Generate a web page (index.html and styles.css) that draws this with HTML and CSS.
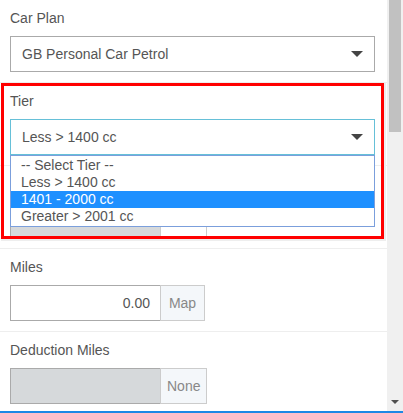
FILE: index.html
```html
<!DOCTYPE html>
<html>
<head>
<meta charset="utf-8">
<link rel="stylesheet" href="styles.css">
</head>
<body>
<div class="viewport">
  <div class="main">
    <div class="section first">
      <div class="label">Car Plan</div>
      <div class="select">
        <span class="select-text">GB Personal Car Petrol</span>
        <span class="caret"></span>
      </div>
    </div>
    <div class="section">
      <div class="label">Tier</div>
      <div class="field">
        <div class="select focused">
          <span class="select-text">Less &gt; 1400 cc</span>
          <span class="caret"></span>
        </div>
        <ul class="dropdown">
          <li class="option">-- Select Tier --</li>
          <li class="option">Less &gt; 1400 cc</li>
          <li class="option active">1401 - 2000 cc</li>
          <li class="option">Greater &gt; 2001 cc</li>
        </ul>
      </div>
    </div>
    <div class="section">
      <div class="label"></div>
      <div class="input-group">
        <div class="input disabled"></div>
        <div class="addon blank"></div>
      </div>
    </div>
    <div class="section">
      <div class="label">Miles</div>
      <div class="input-group">
        <div class="input">0.00</div>
        <div class="addon">Map</div>
      </div>
    </div>
    <div class="section">
      <div class="label">Deduction Miles</div>
      <div class="input-group">
        <div class="input disabled"></div>
        <div class="addon">None</div>
      </div>
    </div>
    <div class="highlight-box"></div>
  </div>
  <div class="scrollbar">
    <div class="thumb"></div>
    <div class="arrow-down"></div>
  </div>
</div>
<div class="bottom-line"></div>
</body>
</html>
```

FILE: styles.css
```css
* {
  box-sizing: border-box;
}

html, body {
  margin: 0;
  padding: 0;
  background: #fff;
}

body {
  width: 403px;
  height: 413px;
  overflow: hidden;
  font-family: "Liberation Sans", Arial, sans-serif;
  font-size: 14px;
  color: #555;
  display: flex;
  flex-direction: column;
}

.viewport {
  display: flex;
  height: 411px;
  overflow: hidden;
}

.main {
  position: relative;
  width: 387px;
  flex: none;
  display: flex;
  flex-direction: column;
}

.section {
  padding: 8px 12px 10px 10px;
  border-top: 1px solid #eeeeee;
  flex: none;
}

.section.first {
  border-top: none;
}

.label {
  height: 20px;
  line-height: 20px;
  margin-bottom: 8px;
  color: #555;
}

.field {
  position: relative;
}

.select {
  height: 36px;
  border: 1px solid #aaaaaa;
  padding: 0 11px;
  display: flex;
  align-items: center;
  justify-content: space-between;
  background: #fff;
}

.select.focused {
  border-color: #66c0d8;
}

.select-text {
  line-height: 20px;
}

.caret {
  width: 0;
  height: 0;
  border-left: 6px solid transparent;
  border-right: 6px solid transparent;
  border-top: 6px solid #444;
}

.dropdown {
  position: absolute;
  left: 0;
  right: 0;
  top: 100%;
  margin: 0;
  padding: 1px 0;
  list-style: none;
  background: #fff;
  border: 1px solid #7b9fdc;
  z-index: 5;
}

.option {
  height: 17px;
  line-height: 17px;
  padding-left: 10px;
  color: #555;
}

.option.active {
  background: #1e90ff;
  color: #fff;
}

.input-group {
  display: flex;
  height: 36px;
}

.input {
  width: 150px;
  height: 36px;
  border: 1px solid #aaaaaa;
  border-right: none;
  padding: 0 10px;
  line-height: 34px;
  text-align: right;
  color: #555;
}

.input.disabled {
  background: #d6d9db;
}

.addon {
  min-width: 45px;
  height: 36px;
  border: 1px solid #cccccc;
  background: #f4f7fa;
  padding: 0 6px;
  line-height: 34px;
  text-align: center;
  color: #888;
}

.addon.blank {
  width: 47px;
  background: #fff;
}

.highlight-box {
  position: absolute;
  left: 1px;
  top: 83px;
  width: 383px;
  height: 156px;
  border: 3px solid #ff0000;
  box-shadow: 1px 1px 0 1px #eeeeee;
  z-index: 10;
  pointer-events: none;
}

.scrollbar {
  width: 16px;
  flex: none;
  background: #f0f0f0;
  display: flex;
  flex-direction: column;
  justify-content: space-between;
  align-items: center;
}

.thumb {
  width: 12px;
  height: 132px;
  background: #c1c1c1;
}

.arrow-down {
  width: 0;
  height: 0;
  border-left: 4px solid transparent;
  border-right: 4px solid transparent;
  border-top: 4px solid #505050;
  margin-bottom: 7px;
}

.bottom-line {
  height: 2px;
  background: #1e88e5;
  flex: none;
}
```
